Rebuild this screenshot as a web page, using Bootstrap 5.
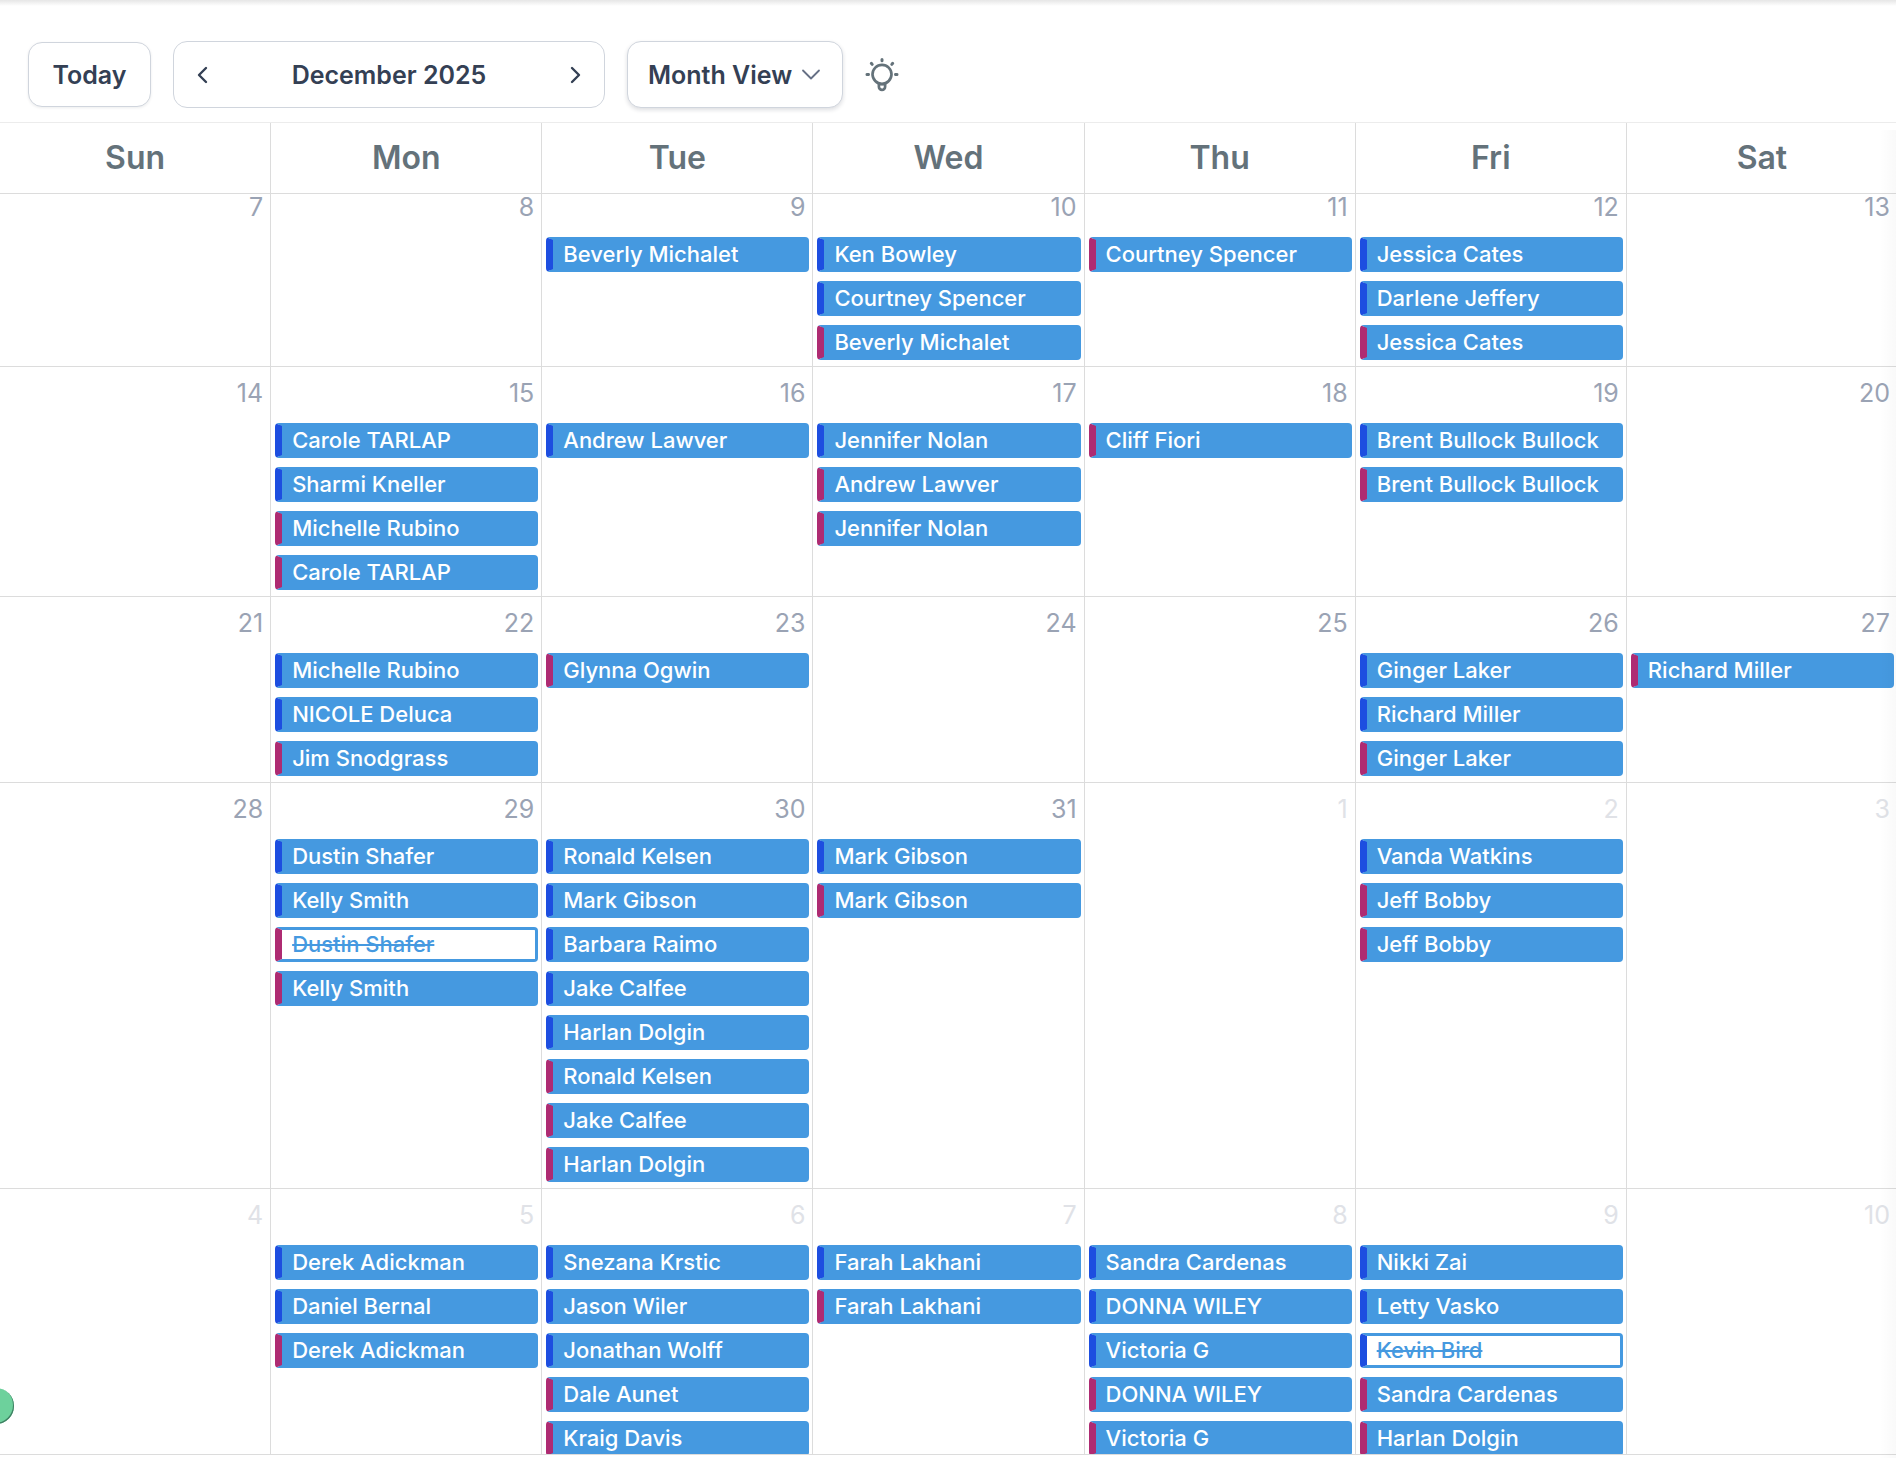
<!DOCTYPE html>
<html lang="en">
<head>
<meta charset="utf-8">
<meta name="viewport" content="width=device-width, initial-scale=1">
<title>Calendar – December 2025</title>
<link href="https://cdn.jsdelivr.net/npm/bootstrap@5.3.0/dist/css/bootstrap.min.css" rel="stylesheet">
<style>
  :root { --ink:#344054; --line:#dcdcdc; --event:#4599e0; --in:#1d4ee0; --out:#ae2b72; --ctl:#d0d5dd; }
  body { font-family: Inter, "Liberation Sans", sans-serif; color: var(--ink); background:#fff; }
  .app { height: 100vh; padding-bottom: 3px; }
  .top-shadow { top:0; left:0; right:0; height:6px; background: linear-gradient(#e6e6e6, #fff); }
  .side-shadow { top:130px; right:0; bottom:0; width:16px; background: linear-gradient(to right, rgba(0,0,0,0), rgba(0,0,0,.025)); pointer-events:none; }
  .toolbar { padding: 41px 28px 14px; gap: 22px; }
  .ctl { border:1px solid var(--ctl); border-radius:14px; background-color:#fff; color:var(--ink); font-size:25px; line-height:36px; font-weight:600; }
  .ctl-today { width:123px; height:65px; padding:0; box-shadow:0 1px 3px rgba(16,24,40,.08); }
  .ctl-nav { width:432px; height:67px; }
  .ctl-nav button { border:0; background:none; padding:0 21px; line-height:0; color:inherit; }
  .ctl-view { width:216px; height:67px; padding:0 0 0 20px; appearance:none; box-shadow:0 2px 4px rgba(16,24,40,.14);
    background-repeat:no-repeat; background-position:right 21px center;
    background-image:url("data:image/svg+xml,%3Csvg xmlns='http://www.w3.org/2000/svg' width='20' height='12' viewBox='0 0 20 12'%3E%3Cpath d='M2 1.5l8 8 8-8' fill='none' stroke='%23667085' stroke-width='1.8' stroke-linecap='round' stroke-linejoin='round'/%3E%3C/svg%3E"); }
  .tips { border:0; background:none; padding:0; line-height:0; color:#64727a; }
  .cal { width: calc(100% + 2px); border-bottom:1px solid var(--line); }
  .seven { display:grid; grid-template-columns: repeat(7, minmax(0,1fr)); }
  .dow { border-top:1px solid #ececec; border-bottom:1px solid var(--line); }
  .dow > div { height:70px; line-height:70px; font-size:32px; font-weight:600; color:#64727a; text-align:center; border-right:1px solid var(--line); }
  .weeks { min-height:0; }
  .weeks > .seven { border-bottom:1px solid var(--line); }
  .day { border-right:1px solid var(--line); padding:0 3px 6px 4px; }
  .num { height:56px; padding:13px 4px 0 0; font-size:25px; line-height:26px; color:#9aa3b4; text-align:right; }
  .weeks > .seven:first-child .num { height:43px; padding-top:0; }
  .dim .num, .num.dim { color:#e0e2e7; }
  .ev { display:block; height:35px; margin-bottom:9px; border:3px solid var(--event); border-left:7px solid var(--in); border-radius:4px; background:var(--event); color:#fff; font-size:22px; line-height:29px; font-weight:550; padding-left:10px; text-decoration:none; white-space:nowrap; overflow:hidden; }
  .ev:last-child { margin-bottom:0; }
  .ev.out { border-left-color:var(--out); }
  .ev.off { background:#fff; color:var(--event); text-decoration:line-through; }
  .bubble { left:-22px; top:1388px; width:36px; height:36px; border-radius:50%; background:#6dd19c; box-shadow: inset -1px -1px 0 #3f7f62; border:0; padding:0; }
</style>
</head>
<body>
<div class="app d-flex flex-column overflow-hidden position-relative">
  <div class="top-shadow position-absolute"></div>
  <header class="toolbar d-flex align-items-center">
    <button type="button" class="ctl ctl-today">Today</button>
    <div class="ctl ctl-nav d-flex align-items-center justify-content-between">
      <button type="button" aria-label="Previous month"><svg width="14" height="20" viewBox="0 0 14 20" fill="none" stroke="currentColor" stroke-width="2.4" stroke-linecap="round" stroke-linejoin="round"><path d="M11 3L4 10l7 7"/></svg></button>
      <span>December 2025</span>
      <button type="button" aria-label="Next month"><svg width="14" height="20" viewBox="0 0 14 20" fill="none" stroke="currentColor" stroke-width="2.4" stroke-linecap="round" stroke-linejoin="round"><path d="M3 3l7 7-7 7"/></svg></button>
    </div>
    <select class="ctl ctl-view" aria-label="Calendar view"><option>Month View</option></select>
    <button type="button" class="tips" aria-label="Tips"><svg width="34" height="34" viewBox="0 0 34 34" fill="none" stroke="currentColor" stroke-linecap="round" stroke-linejoin="round"><circle cx="17" cy="16.300" r="9.500" stroke-width="2.700"/><path d="M13.900 25.800v3a3.100 3.100 0 0 0 6.200 0v-3" stroke-width="2.700"/><path d="M14.500 26.600h5" stroke-width="2"/><path d="M17 1.500v1.300M6.300 5.300l.9 1.100M27.700 5.300l-.9 1.100M2 16.600l1.500-.2M32 16.600l-1.500-.2" stroke-width="3"/></svg></button>
  </header>

  <main class="cal d-flex flex-column flex-grow-1 overflow-hidden">
    <div class="dow seven flex-shrink-0"><div>Sun</div><div>Mon</div><div>Tue</div><div>Wed</div><div>Thu</div><div>Fri</div><div>Sat</div></div>
    <div class="weeks flex-grow-1">

      <div class="seven">
        <div class="day"><div class="num">7</div></div>
        <div class="day"><div class="num">8</div></div>
        <div class="day"><div class="num">9</div><a href="#" class="ev">Beverly Michalet</a></div>
        <div class="day"><div class="num">10</div><a href="#" class="ev">Ken Bowley</a><a href="#" class="ev">Courtney Spencer</a><a href="#" class="ev out">Beverly Michalet</a></div>
        <div class="day"><div class="num">11</div><a href="#" class="ev out">Courtney Spencer</a></div>
        <div class="day"><div class="num">12</div><a href="#" class="ev">Jessica Cates</a><a href="#" class="ev">Darlene Jeffery</a><a href="#" class="ev out">Jessica Cates</a></div>
        <div class="day"><div class="num">13</div></div>
      </div>

      <div class="seven">
        <div class="day"><div class="num">14</div></div>
        <div class="day"><div class="num">15</div><a href="#" class="ev">Carole TARLAP</a><a href="#" class="ev">Sharmi Kneller</a><a href="#" class="ev out">Michelle Rubino</a><a href="#" class="ev out">Carole TARLAP</a></div>
        <div class="day"><div class="num">16</div><a href="#" class="ev">Andrew Lawver</a></div>
        <div class="day"><div class="num">17</div><a href="#" class="ev">Jennifer Nolan</a><a href="#" class="ev out">Andrew Lawver</a><a href="#" class="ev out">Jennifer Nolan</a></div>
        <div class="day"><div class="num">18</div><a href="#" class="ev out">Cliff Fiori</a></div>
        <div class="day"><div class="num">19</div><a href="#" class="ev">Brent Bullock Bullock</a><a href="#" class="ev out">Brent Bullock Bullock</a></div>
        <div class="day"><div class="num">20</div></div>
      </div>

      <div class="seven">
        <div class="day"><div class="num">21</div></div>
        <div class="day"><div class="num">22</div><a href="#" class="ev">Michelle Rubino</a><a href="#" class="ev">NICOLE Deluca</a><a href="#" class="ev out">Jim Snodgrass</a></div>
        <div class="day"><div class="num">23</div><a href="#" class="ev out">Glynna Ogwin</a></div>
        <div class="day"><div class="num">24</div></div>
        <div class="day"><div class="num">25</div></div>
        <div class="day"><div class="num">26</div><a href="#" class="ev">Ginger Laker</a><a href="#" class="ev">Richard Miller</a><a href="#" class="ev out">Ginger Laker</a></div>
        <div class="day"><div class="num">27</div><a href="#" class="ev out">Richard Miller</a></div>
      </div>

      <div class="seven">
        <div class="day"><div class="num">28</div></div>
        <div class="day"><div class="num">29</div><a href="#" class="ev">Dustin Shafer</a><a href="#" class="ev">Kelly Smith</a><a href="#" class="ev out off">Dustin Shafer</a><a href="#" class="ev out">Kelly Smith</a></div>
        <div class="day"><div class="num">30</div><a href="#" class="ev">Ronald Kelsen</a><a href="#" class="ev">Mark Gibson</a><a href="#" class="ev">Barbara Raimo</a><a href="#" class="ev">Jake Calfee</a><a href="#" class="ev">Harlan Dolgin</a><a href="#" class="ev out">Ronald Kelsen</a><a href="#" class="ev out">Jake Calfee</a><a href="#" class="ev out">Harlan Dolgin</a></div>
        <div class="day"><div class="num">31</div><a href="#" class="ev">Mark Gibson</a><a href="#" class="ev out">Mark Gibson</a></div>
        <div class="day"><div class="num dim">1</div></div>
        <div class="day"><div class="num dim">2</div><a href="#" class="ev">Vanda Watkins</a><a href="#" class="ev out">Jeff Bobby</a><a href="#" class="ev out">Jeff Bobby</a></div>
        <div class="day"><div class="num dim">3</div></div>
      </div>

      <div class="seven dim">
        <div class="day"><div class="num">4</div></div>
        <div class="day"><div class="num">5</div><a href="#" class="ev">Derek Adickman</a><a href="#" class="ev">Daniel Bernal</a><a href="#" class="ev out">Derek Adickman</a></div>
        <div class="day"><div class="num">6</div><a href="#" class="ev">Snezana Krstic</a><a href="#" class="ev">Jason Wiler</a><a href="#" class="ev">Jonathan Wolff</a><a href="#" class="ev out">Dale Aunet</a><a href="#" class="ev out">Kraig Davis</a></div>
        <div class="day"><div class="num">7</div><a href="#" class="ev">Farah Lakhani</a><a href="#" class="ev out">Farah Lakhani</a></div>
        <div class="day"><div class="num">8</div><a href="#" class="ev">Sandra Cardenas</a><a href="#" class="ev">DONNA WILEY</a><a href="#" class="ev">Victoria G</a><a href="#" class="ev out">DONNA WILEY</a><a href="#" class="ev out">Victoria G</a></div>
        <div class="day"><div class="num">9</div><a href="#" class="ev">Nikki Zai</a><a href="#" class="ev">Letty Vasko</a><a href="#" class="ev off">Kevin Bird</a><a href="#" class="ev out">Sandra Cardenas</a><a href="#" class="ev out">Harlan Dolgin</a></div>
        <div class="day"><div class="num">10</div></div>
      </div>
    </div>
  </main>

  <div class="side-shadow position-absolute"></div>
  <button type="button" class="bubble position-absolute" aria-label="Open chat"></button>
</div>
<script src="https://cdn.jsdelivr.net/npm/bootstrap@5.3.0/dist/js/bootstrap.bundle.min.js"></script>
</body>
</html>
